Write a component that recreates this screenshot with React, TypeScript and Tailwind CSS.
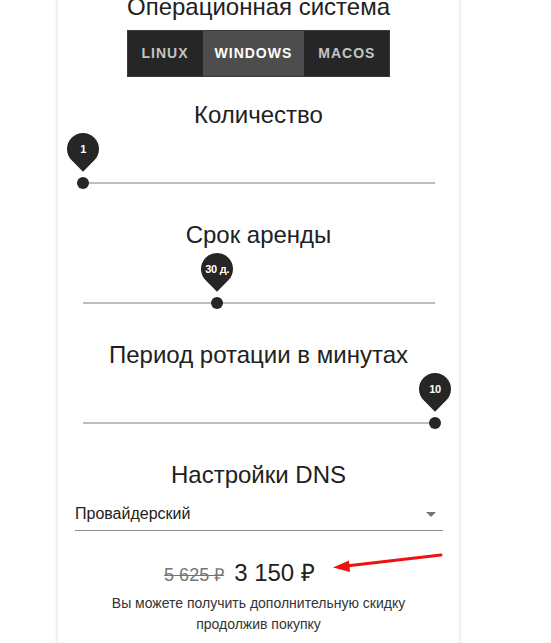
import React from 'react'

interface SliderProps {
  label: string
  pos: number
}

const sliders: { title: string; label: string; pos: number }[] = [
  { title: 'Количество', label: '1', pos: 0 },
  { title: 'Срок аренды', label: '30 д.', pos: 0.38 },
  { title: 'Период ротации в минутах', label: '10', pos: 1 },
]

const osList = ['Linux', 'Windows', 'MacOS']

function Title({ children }: { children: React.ReactNode }) {
  return <h2 className="text-center text-[24px] leading-[26px] text-[#212121]">{children}</h2>
}

function Slider({ label, pos }: SliderProps) {
  return (
    <div className="pl-[25px] pr-[24px] pt-[49px] mb-[33px]">
      <div className="relative h-[12px]">
        <div className="absolute left-0 right-0 top-[5px] h-[2px] bg-[#bdbdbd]" />
        <div className="absolute top-0 w-0" style={{ left: `${pos * 100}%` }}>
          <div className="absolute left-[-6px] top-0 w-[12px] h-[12px] rounded-full bg-[#262626]" />
          <div className="absolute left-[-16px] top-[-44px] w-8 h-8 rounded-[50%_50%_50%_0] -rotate-45 bg-[#262626] flex items-center justify-center">
            <span className="rotate-45 text-[11px] font-bold text-white whitespace-nowrap tracking-[-0.2px]">{label}</span>
          </div>
        </div>
      </div>
    </div>
  )
}

export default function App() {
  const active = 'Windows'
  return (
    <div className="h-[643px] overflow-hidden bg-white font-['Liberation_Sans',Arial,sans-serif]">
      <div className="relative ml-[58px] w-[401px] h-[700px] -mt-[6px] bg-white shadow-[0_0_4px_rgba(0,0,0,0.18)]">
        <Title>Операционная система</Title>
        <div className="mt-[10px] flex justify-center">
          <div className="flex h-[47px] border border-[#3a3a3a] bg-[#262626]">
            {osList.map((os) => (
              <div
                key={os}
                className={
                  os === active
                    ? 'flex items-center px-[12px] bg-[#4d4d4d] text-white text-[14px] font-bold uppercase tracking-[1px]'
                    : 'flex items-center px-[14px] text-[#c4c4c4] text-[14px] font-bold uppercase tracking-[1px]'
                }
              >
                {os}
              </div>
            ))}
          </div>
        </div>

        <div className="mt-[25px]">
          {sliders.map((s) => (
            <div key={s.title}>
              <Title>{s.title}</Title>
              <Slider label={s.label} pos={s.pos} />
            </div>
          ))}
        </div>

        <Title>Настройки DNS</Title>
        <div className="mx-[17px] mr-[16px] mt-[16px] relative border-b border-[#8c8c8c] pb-[6px]">
          <div className="text-[16px] leading-[20px] text-[#212121]">Провайдерский</div>
          <svg className="absolute right-0 top-[-2px]" width="24" height="24" viewBox="0 0 24 24">
            <path d="M7 10l5 5 5-5z" fill="#757575" />
          </svg>
        </div>

        <div className="mt-[28px] flex justify-center items-baseline pr-[38px]">
          <span className="text-[18px] leading-[28px] text-[#757575] line-through mr-[10px]">5 625 ₽</span>
          <span className="text-[24px] leading-[28px] text-[#212121]">3 150 ₽</span>
        </div>
        <p className="mt-[4px] text-center text-[14px] leading-[21px] text-[#333]">
          Вы можете получить дополнительную скидку
          <br />
          продолжив покупку
        </p>
      </div>

      <svg className="absolute left-0 top-0 pointer-events-none" width="551" height="643">
        <line x1="441" y1="555" x2="346" y2="566" stroke="#f01010" strokeWidth="3" strokeLinecap="round" />
        <path d="M333 567.5 L349 560.5 L350 572 Z" fill="#f01010" />
      </svg>
    </div>
  )
}
